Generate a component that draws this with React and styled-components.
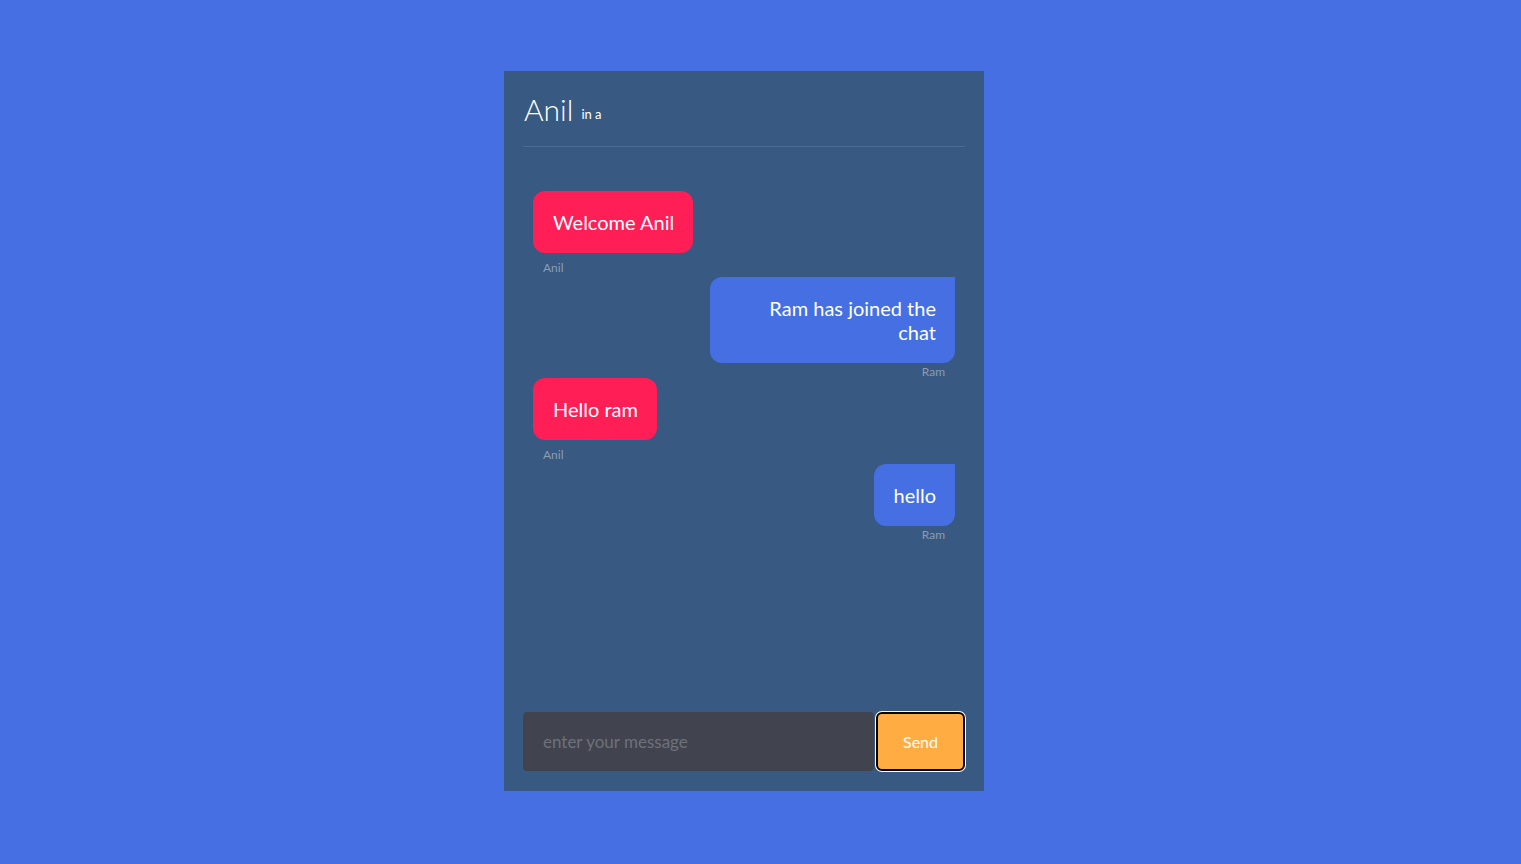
import React from "react";
import styled, { createGlobalStyle } from "styled-components";

const Global = createGlobalStyle`
  html, body { margin: 0; padding: 0; }
  body {
    background: #456fe2;
    font-family: Lato, "Noto Sans", sans-serif;
    overflow: hidden;
  }
`;

const Page = styled.div`
  height: 100vh;
  box-sizing: border-box;
  display: flex;
  align-items: center;
  justify-content: center;
  padding: 0 33px 2px 0;
`;

const Panel = styled.div`
  width: 480px;
  height: 720px;
  background: #385981;
  display: flex;
  flex-direction: column;
`;

const Header = styled.div`
  margin: 0 19px;
  height: 75px;
  display: flex;
  align-items: center;
  border-bottom: 1px solid #4b6b95;
  padding-left: 1px;
`;

const Title = styled.span`
  color: #ffffff;
  font-size: 30px;
  font-weight: 300;
  line-height: 36px;
`;

const Room = styled.span`
  color: #ffffff;
  font-size: 13px;
  margin-left: 8px;
  position: relative;
  top: 5px;
`;

const Messages = styled.div`
  flex: 1;
  padding: 44px 29px 0;
  display: flex;
  flex-direction: column;
`;

const Message = styled.div`
  display: flex;
  flex-direction: column;
  align-items: ${(p) => (p.$own ? "flex-start" : "flex-end")};
`;

const Bubble = styled.div`
  max-width: 245px;
  box-sizing: border-box;
  width: ${(p) => (p.$wrap ? "245px" : "auto")};
  padding: 19px 19px 19px 20px;
  font-size: 20px;
  line-height: 24px;
  color: #fff;
  background: ${(p) => (p.$own ? "#ff1e56" : "#456fe2")};
  border-radius: ${(p) => (p.$own ? "12px" : "12px 0 12px 12px")};
  text-align: ${(p) => (p.$own ? "left" : "right")};
`;

const Sender = styled.div`
  font-size: 12px;
  line-height: 13px;
  color: #8b9cb3;
  margin: ${(p) => (p.$own ? "8px 0 3px 10px" : "2px 10px 0 0")};
`;

const InputRow = styled.div`
  margin: 0 19px 20px;
  display: flex;
  align-items: center;
  gap: 2px;
`;

const Input = styled.input`
  flex: 1;
  min-width: 0;
  height: 59px;
  box-sizing: border-box;
  border: none;
  outline: none;
  border-radius: 4px;
  background: #41444f;
  color: #fff;
  padding: 0 20px;
  font-family: Lato, "Noto Sans", sans-serif;
  font-size: 17px;
  &::placeholder { color: #6d717a; }
`;

const SendButton = styled.button`
  width: 89px;
  height: 59px;
  box-sizing: border-box;
  background: #ffac42;
  color: #fff;
  border: 2px solid #000;
  border-radius: 6px;
  box-shadow: 0 0 0 1px #fff;
  font-family: Lato, "Noto Sans", sans-serif;
  font-size: 16px;
  cursor: pointer;
`;

const messages = [
  { user: "Anil", text: "Welcome Anil", own: true },
  { user: "Ram", text: "Ram has joined the chat", own: false, wrap: true },
  { user: "Anil", text: "Hello ram", own: true },
  { user: "Ram", text: "hello", own: false },
];

export default function App() {
  return (
    <>
      <Global />
      <Page>
        <Panel>
          <Header>
            <Title>Anil</Title>
            <Room>in a</Room>
          </Header>
          <Messages>
            {messages.map((m, i) => (
              <Message key={i} $own={m.own}>
                <Bubble $own={m.own} $wrap={m.wrap}>{m.text}</Bubble>
                <Sender $own={m.own}>{m.user}</Sender>
              </Message>
            ))}
          </Messages>
          <InputRow>
            <Input placeholder="enter your message" />
            <SendButton>Send</SendButton>
          </InputRow>
        </Panel>
      </Page>
    </>
  );
}
